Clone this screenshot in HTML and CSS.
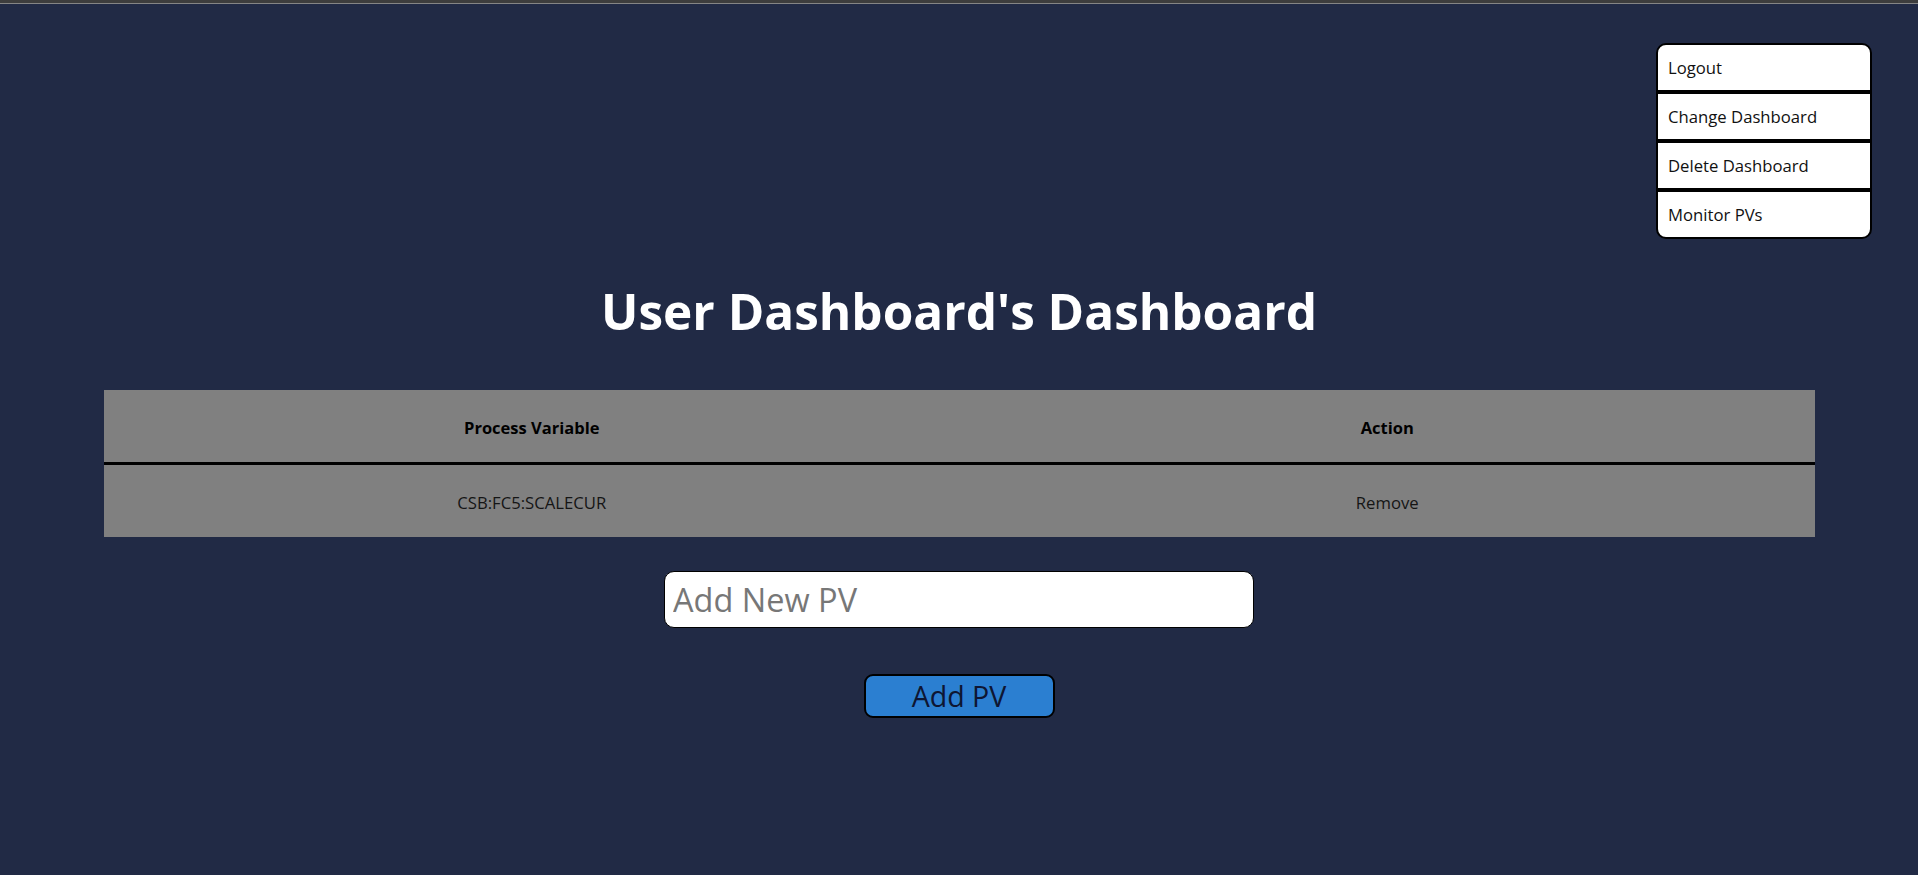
FILE: index.html
```html
<!DOCTYPE html>
<html lang="en">
<head>
<meta charset="utf-8">
<title>User Dashboard's Dashboard</title>
<link rel="stylesheet" href="styles.css">
</head>
<body>
<div class="topbar"></div>
<header class="header">
  <nav class="menu">
    <button class="menu-item" type="button">Logout</button>
    <button class="menu-item" type="button">Change Dashboard</button>
    <button class="menu-item" type="button">Delete Dashboard</button>
    <button class="menu-item" type="button">Monitor PVs</button>
  </nav>
</header>
<main class="main">
  <h1 class="title">User Dashboard's Dashboard</h1>
  <section class="table-wrap">
    <table class="pv-table">
      <thead>
        <tr>
          <th>Process Variable</th>
          <th>Action</th>
        </tr>
      </thead>
      <tbody>
        <tr>
          <td>CSB:FC5:SCALECUR</td>
          <td>Remove</td>
        </tr>
      </tbody>
    </table>
  </section>
  <form class="add-form">
    <input class="pv-input" type="text" placeholder="Add New PV">
    <button class="add-btn" type="button">Add PV</button>
  </form>
</main>
</body>
</html>
```

FILE: styles.css
```css
html, body {
  margin: 0;
  padding: 0;
}

body {
  background: #212a45;
  font-family: "Open Sans", "Noto Sans", "DejaVu Sans", sans-serif;
  color: #111;
  min-height: 875px;
}

.topbar {
  height: 3px;
  background: #3d3d3d;
  border-bottom: 1px solid #858585;
}

.header {
  display: flex;
  justify-content: flex-end;
  padding: 39px 46px 0 0;
}

.menu {
  display: flex;
  flex-direction: column;
  width: 216px;
}

.menu-item {
  box-sizing: border-box;
  height: 49px;
  margin: 0;
  padding: 0 10px;
  border: 2px solid #000;
  background: #fff;
  color: #111;
  font-family: inherit;
  font-size: 16.7px;
  line-height: 45px;
  text-align: left;
  border-radius: 0;
}

.menu-item:first-child {
  border-radius: 10px 10px 0 0;
}

.menu-item:last-child {
  border-radius: 0 0 10px 10px;
}

.title {
  margin: 44px 0 0;
  text-align: center;
  color: #fff;
  font-size: 49.5px;
  line-height: 56px;
  font-weight: 700;
}

.table-wrap {
  padding: 51px 103px 0 104px;
}

.pv-table {
  width: 100%;
  border-collapse: collapse;
  background: #808080;
  table-layout: fixed;
}

.pv-table th,
.pv-table td {
  text-align: center;
  line-height: 22px;
  padding: 27px 0 23px;
}

.pv-table th {
  font-size: 16.5px;
  font-weight: 700;
  color: #000;
  border-bottom: 3px solid #000;
}

.pv-table td {
  font-size: 16.7px;
  color: #151515;
}

.add-form {
  display: flex;
  flex-direction: column;
  align-items: center;
  padding-top: 34px;
  margin: 0;
}

.pv-input {
  box-sizing: border-box;
  width: 590px;
  height: 57px;
  margin: 0;
  padding: 0 8px;
  border: 1px solid #000;
  border-radius: 10px;
  background: #fff;
  font-family: inherit;
  font-size: 32.5px;
  color: #111;
  outline: none;
}

.pv-input::placeholder {
  color: #777;
}

.add-btn {
  box-sizing: border-box;
  width: 191px;
  height: 44px;
  margin-top: 46px;
  padding: 0;
  border: 2px solid #000;
  border-radius: 9px;
  background: #2b7fd1;
  color: #0e1633;
  font-family: inherit;
  font-size: 28.6px;
  line-height: 38px;
}
```
